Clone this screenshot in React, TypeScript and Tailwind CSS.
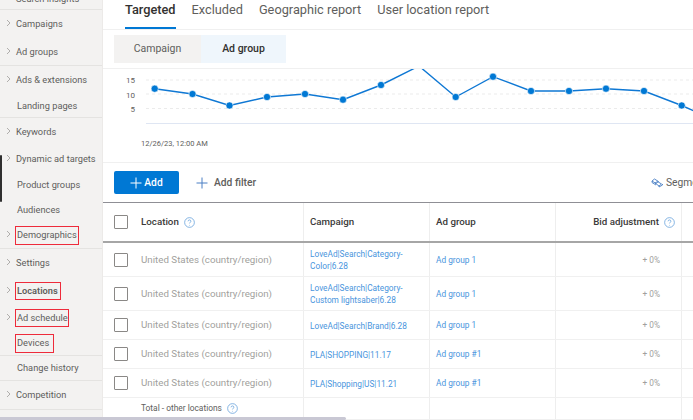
import React from "react";

const F = "font-['Roboto',sans-serif]";

function Chevron() {
  return (
    <svg width="5" height="8" viewBox="0 0 5 8" className="absolute left-[6px] top-1/2 -mt-[5px]" fill="none" stroke="#a8a6a4" strokeWidth="0.9">
      <path d="M1 1l3 3-3 3" />
    </svg>
  );
}

type Side = { t: string; h: number; chev?: boolean; sep?: boolean; red?: string; bold?: boolean; inset?: boolean };

const side: Side[] = [
  { t: "Search insights", h: 11, sep: true },
  { t: "Campaigns", h: 28, chev: true },
  { t: "Ad groups", h: 28, chev: true, sep: true },
  { t: "Ads & extensions", h: 28, chev: true },
  { t: "Landing pages", h: 24, inset: true, sep: true },
  { t: "Keywords", h: 28, chev: true },
  { t: "Dynamic ad targets", h: 26, chev: true },
  { t: "Product groups", h: 26, inset: true },
  { t: "Audiences", h: 24, inset: true },
  { t: "Demographics", h: 27, chev: true, red: "w-[64px] h-[19px]", sep: true },
  { t: "Settings", h: 28, chev: true },
  { t: "Locations", h: 27, chev: true, bold: true, red: "w-[46px] h-[18px]" },
  { t: "Ad schedule", h: 27, chev: true, red: "w-[54px] h-[18px]" },
  { t: "Devices", h: 25, inset: true, red: "w-[39px] h-[19px]", sep: true },
  { t: "Change history", h: 25, inset: true, sep: true },
  { t: "Competition", h: 29, chev: true, sep: true },
];

function SideItem({ s }: { s: Side }) {
  return (
    <div
      className={`relative shrink-0 flex items-center text-[9.25px] text-[#605e5c] ${s.sep ? "border-b border-[#e4e3e1]" : ""} ${s.bold ? "font-semibold text-[#3b3a39]" : ""} ${s.h === 11 ? "items-start -mt-[1px]" : ""}`}
      style={{ height: s.h }}
    >
      {s.chev && <Chevron />}
      {s.red ? (
        <span className={`ml-[15px] flex items-center pl-[1px] border border-[#ee2b3b] whitespace-nowrap ${s.red}`}>{s.t}</span>
      ) : (
        <span className={`whitespace-nowrap ${s.h === 11 ? "-mt-[7px]" : ""} ${s.inset ? "ml-[17px]" : "ml-[16px]"}`}>{s.t}</span>
      )}
    </div>
  );
}

function Help({ size = 11 }: { size?: number }) {
  return (
    <svg width={size} height={size} viewBox="0 0 12 12" fill="none" className="shrink-0">
      <circle cx="6" cy="6" r="5.3" stroke="#5a9ad8" strokeWidth="0.8" />
      <path d="M4.4 4.7c0-1 .8-1.5 1.6-1.5s1.6.6 1.6 1.4c0 1.2-1.6 1.2-1.6 2.4" stroke="#5a9ad8" strokeWidth="0.8" />
      <circle cx="6" cy="8.9" r="0.5" fill="#5a9ad8" />
    </svg>
  );
}

function Check() {
  return <div className="w-[14px] h-[14px] border border-[#8a8886] rounded-[1px] bg-white shrink-0" />;
}

const pts: [number, number][] = [
  [51.7, 19.7], [89.5, 25], [126.5, 36.5], [164, 28], [202, 25], [240, 30.7], [278, 16],
  [316, -3], [352.7, 28], [390, 7.7], [428, 22], [466, 22], [503, 19.7], [541, 22], [578.7, 36.5], [600, 46],
];

function Chart() {
  return (
    <svg width="590" height="94" viewBox="0 0 590 94" className="block">
      {[11, 25, 39.5].map((y) => (
        <line key={y} x1="43" x2="590" y1={y} y2={y} stroke="#e6e6e6" strokeWidth="0.8" strokeDasharray="3 3" />
      ))}
      <line x1="43" x2="590" y1="54.5" y2="54.5" stroke="#dfe6f3" strokeWidth="1" />
      <g fontSize="8" fill="#605e5c" fontFamily="Roboto, sans-serif" textAnchor="end">
        <text x="32" y="13.5">15</text>
        <text x="32" y="28.5">10</text>
        <text x="32" y="43">5</text>
      </g>
      <text x="38" y="77" fontSize="7.5" fill="#605e5c" fontFamily="Roboto, sans-serif">12/26/23, 12:00 AM</text>
      <polyline points={pts.map((p) => p.join(",")).join(" ")} fill="none" stroke="#0f78d4" strokeWidth="1.4" />
      {pts.map((p, i) =>
        i === 7 || i === 15 ? null : (
          <circle key={i} cx={p[0]} cy={p[1]} r="3.6" fill="#0078d4" stroke="#fff" strokeWidth="0.6" />
        )
      )}
    </svg>
  );
}

const rows = [
  { c: ["LoveAd|Search|Category-", "Color|6.28"], g: "Ad group 1", h: 34 },
  { c: ["LoveAd|Search|Category-", "Custom lightsaber|6.28"], g: "Ad group 1", h: 34 },
  { c: ["LoveAd|Search|Brand|6.28"], g: "Ad group 1", h: 29 },
  { c: ["PLA|SHOPPING|11.17"], g: "Ad group #1", h: 29 },
  { c: ["PLA|Shopping|US|11.21"], g: "Ad group #1", h: 29 },
];

const colA = "w-[201px] shrink-0 flex items-center";
const col = "shrink-0 w-[126px] border-r border-[#eeeeee] h-full flex items-center";

export default function App() {
  return (
    <div className={`relative w-[693px] h-[420px] overflow-hidden bg-white flex ${F}`}>
      {/* sidebar */}
      <aside className="relative w-[103px] shrink-0 h-full bg-[#f3f2f1] flex flex-col border-r border-[#eceae8]">
        {side.map((s) => (
          <SideItem key={s.t} s={s} />
        ))}
        <div className="absolute left-0 top-[155px] w-[2px] h-[47px] bg-[#2f2f2f] rounded-[1px]" />
      </aside>

      {/* main */}
      <main className="flex-1 min-w-0 flex flex-col">
        <nav className="h-[30px] shrink-0 flex gap-[16px] pl-[22px] border-b border-[#f0f0f0] text-[12.75px] text-[#605e5c] leading-[20px]">
          <div className="h-[29px] border-b-2 border-[#0078d4] font-medium text-[#323130] whitespace-nowrap">Targeted</div>
          <div className="whitespace-nowrap">Excluded</div>
          <div className="whitespace-nowrap">Geographic report</div>
          <div className="whitespace-nowrap">User location report</div>
        </nav>

        <div className="h-[38px] shrink-0 flex items-start pt-[5px] pl-[11px] text-[10.5px]">
          <div className="w-[87px] h-[28px] bg-[#f3f2f1] text-[#605e5c] flex items-center justify-center">Campaign</div>
          <div className="w-[85px] h-[28px] bg-[#eff6fc] text-[#323130] font-medium flex items-center justify-center">Ad group</div>
        </div>

        <div className="h-[95px] shrink-0 border-y border-[#f0f0f0] overflow-hidden">
          <Chart />
        </div>

        <div className="h-[39px] shrink-0 flex items-start pt-[8px] pl-[11px] text-[10.25px]">
          <button className="w-[65px] h-[23px] bg-[#0078d4] rounded-[2px] text-white font-medium flex items-center justify-center gap-[2px]">
            <svg width="12" height="12" viewBox="0 0 12 12" stroke="#fff" strokeWidth="1"><path d="M6 .5v11M.5 6h11" /></svg>
            Add
          </button>
          <div className="ml-[17px] h-[23px] flex items-center gap-[6px] font-medium text-[#605e5c]">
            <svg width="12" height="12" viewBox="0 0 12 12" stroke="#4a7fc4" strokeWidth="1"><path d="M6 .5v11M.5 6h11" /></svg>
            Add filter
          </div>
          <div className="ml-auto h-[23px] flex items-center gap-[2px] text-[#605e5c] whitespace-nowrap -mr-[19px]">
            <svg width="13" height="10" viewBox="0 0 13 10" fill="none" stroke="#4a7fc4" strokeWidth="0.9">
              <path d="M1 3l2.5-2 4 2.5L5 5.5zM4 5l2.5-1.5 4 2.5L8 8z" />
              <path d="M1 3v1.5l4 2.5M8 8v1l3.5-2V6" />
            </svg>
            Segments
          </div>
        </div>

        {/* table */}
        <div className="border-t border-[#8f8f95] flex-1 min-h-0">
          <div className="h-[40px] flex items-center border-b-[2px] border-[#a6a6a6] text-[9.75px] font-medium text-[#3b3a39]">
            <div className={`${colA} h-full pl-[11px] gap-[13px] border-r border-[#eeeeee]`}>
              <Check />
              <span className="flex items-center gap-[5px] pt-[1px]">Location <Help /></span>
            </div>
            <div className={`${col} pl-[6px] pt-[1px]`}>Campaign</div>
            <div className={`${col} pl-[6px] pt-[1px]`}>Ad group</div>
            <div className={`${col} justify-end pr-[6px] gap-[5px] pt-[1px]`}>Bid adjustment <Help /></div>
          </div>
          {rows.map((r, i) => (
            <div key={i} className="flex items-center border-b border-[#f0f0f0]" style={{ height: r.h }}>
              <div className={`${colA} h-full pl-[11px] gap-[13px] border-r border-[#eeeeee] text-[9.75px] text-[#a19f9d]`}>
                <Check />
                <span className="whitespace-nowrap pt-[1px]">United States (country/region)</span>
              </div>
              <div className={`${col} pl-[6px] pt-[1px] text-[8.3px] leading-[12px] text-[#4a95dd]`}>
                <div>{r.c.map((l) => <div key={l} className="whitespace-nowrap">{l}</div>)}</div>
              </div>
              <div className={`${col} pl-[6px] pt-[1px] text-[8.3px] text-[#4a95dd]`}>{r.g}</div>
              <div className={`${col} justify-end pr-[21px] pt-[1px] text-[8.3px] text-[#a19f9d]`}>+ 0%</div>
            </div>
          ))}
          <div className="flex items-center h-[22px] border-b border-[#f0f0f0]">
            <div className={`${colA} h-full pl-[38px] gap-[5px] border-r border-[#eeeeee] text-[8.4px] text-[#605e5c]`}>
              <span>Total - other locations</span> <Help />
            </div>
            <div className={col} />
            <div className={col} />
            <div className={col} />
          </div>
        </div>
      </main>

      <div className="absolute left-0 bottom-0 w-[346px] h-[3px] bg-[#c9c8d4] rounded-r-[2px]" />
    </div>
  );
}
